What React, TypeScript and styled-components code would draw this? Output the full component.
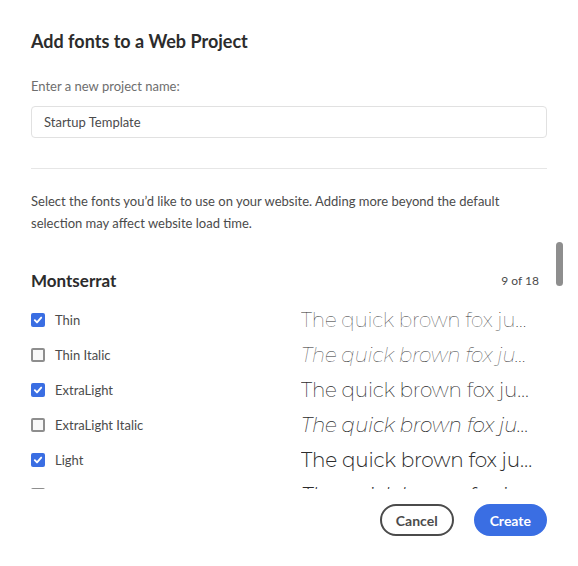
import styled, { createGlobalStyle } from "styled-components";

const GlobalStyle = createGlobalStyle`
  body {
    margin: 0;
    background: #fff;
    font-family: Lato, "Open Sans", sans-serif;
  }
`;

type Style = {
  name: string;
  weight: number;
  italic: boolean;
  checked: boolean;
};

const styles: Style[] = [
  { name: "Thin", weight: 100, italic: false, checked: true },
  { name: "Thin Italic", weight: 100, italic: true, checked: false },
  { name: "ExtraLight", weight: 200, italic: false, checked: true },
  { name: "ExtraLight Italic", weight: 200, italic: true, checked: false },
  { name: "Light", weight: 300, italic: false, checked: true },
  { name: "Light Italic", weight: 300, italic: true, checked: false },
];

const sample = "The quick brown fox jumps over the lazy dog";

const App = () => {
  return (
    <>
      <GlobalStyle />
      <Dialog>
        <Title>Add fonts to a Web Project</Title>
        <Label htmlFor="project">Enter a new project name:</Label>
        <Input id="project" defaultValue="Startup Template" />
        <Divider />
        <ScrollArea>
          <Intro>
            Select the fonts you’d like to use on your website. Adding more beyond the default
            selection may affect website load time.
          </Intro>
          <FamilyHeader>
            <FamilyName>Montserrat</FamilyName>
            <Count>9 of 18</Count>
          </FamilyHeader>
          <StyleList>
            {styles.map((s) => (
              <Row key={s.name}>
                <Check checked={s.checked}>
                  {s.checked && (
                    <svg width="10" height="10" viewBox="0 0 10 10">
                      <path d="M1.8 5.2 L4 7.4 L8.2 2.6" fill="none" stroke="#fff" strokeWidth="1.9" strokeLinecap="round" strokeLinejoin="round" />
                    </svg>
                  )}
                </Check>
                <StyleName>{s.name}</StyleName>
                <Sample $weight={s.weight} $italic={s.italic}>
                  {sample}
                </Sample>
              </Row>
            ))}
          </StyleList>
          <Thumb />
        </ScrollArea>
        <Footer>
          <Button>Cancel</Button>
          <Button $primary>Create</Button>
        </Footer>
      </Dialog>
    </>
  );
};

export default App;

const Dialog = styled.div`
  width: 578px;
  height: 566px;
  box-sizing: border-box;
  padding: 29px 31px 0 31px;
  display: flex;
  flex-direction: column;
`;

const Title = styled.h2`
  margin: 0;
  font-size: 18px;
  line-height: 24px;
  font-weight: 700;
  color: #2c2c2c;
`;

const Label = styled.label`
  display: block;
  margin-top: 24px;
  font-size: 13px;
  line-height: 18px;
  color: #6e6e6e;
`;

const Input = styled.input`
  margin-top: 11px;
  width: 100%;
  height: 32px;
  box-sizing: border-box;
  border: 1px solid #e1e1e1;
  border-radius: 4px;
  padding: 0 12px;
  font-family: Lato, "Open Sans", sans-serif;
  font-size: 13px;
  color: #4b4b4b;
  outline: none;
`;

const Divider = styled.hr`
  margin: 30px 0 0;
  border: 0;
  border-top: 1px solid #e6e6e6;
`;

const ScrollArea = styled.div`
  position: relative;
  height: 320px;
  overflow: hidden;
  margin-right: -24px;
  padding-right: 32px;
`;

const Thumb = styled.div`
  position: absolute;
  top: 73px;
  right: 8px;
  width: 7px;
  height: 44px;
  border-radius: 4px;
  background: #8e8e8e;
`;

const Intro = styled.p`
  margin: 21px 0 0;
  font-size: 13px;
  line-height: 22px;
  color: #4b4b4b;
`;

const FamilyHeader = styled.div`
  margin-top: 34px;
  display: flex;
  align-items: center;
  justify-content: space-between;
  height: 24px;
`;

const FamilyName = styled.h3`
  margin: 0;
  font-size: 17px;
  font-weight: 700;
  color: #2c2c2c;
`;

const Count = styled.span`
  font-size: 12px;
  color: #4b4b4b;
`;

const StyleList = styled.div`
  padding-top: 10px;
`;

const Row = styled.div`
  height: 35px;
  display: grid;
  grid-template-columns: 14px 236px 1fr;
  column-gap: 10px;
  align-items: center;
`;

const Check = styled.span<{ checked: boolean }>`
  width: 14px;
  height: 14px;
  box-sizing: border-box;
  border-radius: 2px;
  display: flex;
  align-items: center;
  justify-content: center;
  background: ${({ checked }) => (checked ? "#3a6ee3" : "#f8f8f8")};
  border: ${({ checked }) => (checked ? "none" : "2px solid #8e8e8e")};
`;

const StyleName = styled.span`
  font-size: 13px;
  color: #4b4b4b;
`;

const Sample = styled.span<{ $weight: number; $italic: boolean }>`
  font-family: Montserrat, Inter, "Open Sans", sans-serif;
  font-size: 20px;
  letter-spacing: -0.2px;
  font-weight: ${({ $weight }) => $weight};
  font-style: ${({ $italic }) => ($italic ? "italic" : "normal")};
  color: #2c2c2c;
  white-space: nowrap;
  overflow: hidden;
  text-overflow: ellipsis;
`;

const Footer = styled.div`
  margin-top: 15px;
  display: flex;
  justify-content: flex-end;
  gap: 20px;
`;

const Button = styled.button<{ $primary?: boolean }>`
  height: 32px;
  padding: 0 14px;
  border-radius: 16px;
  box-sizing: border-box;
  font-family: Lato, "Open Sans", sans-serif;
  font-size: 14px;
  font-weight: 700;
  cursor: pointer;
  color: ${({ $primary }) => ($primary ? "#fff" : "#4b4b4b")};
  background: ${({ $primary }) => ($primary ? "#3a6ee3" : "#fff")};
  border: 2px solid ${({ $primary }) => ($primary ? "#3a6ee3" : "#4b4b4b")};
`;
